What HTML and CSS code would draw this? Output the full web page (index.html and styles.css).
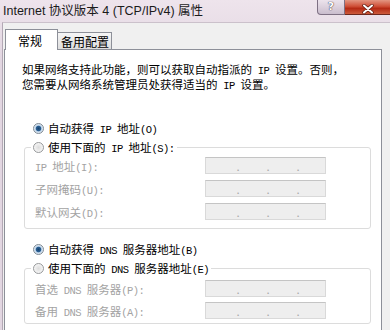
FILE: index.html
```html
<!DOCTYPE html>
<html lang="zh-CN">
<head>
  <meta charset="UTF-8">
  <title>Internet 协议版本 4 (TCP/IPv4) 属性</title>
  <link rel="stylesheet" href="styles.css">
</head>
<body>
  <div class="window">
    <!-- barra de título -->
    <div class="titlebar">
      <span class="title">Internet 协议版本 4 (TCP/IPv4) 属性</span>
      <div class="btn-help">?</div>
      <div class="btn-close">
        <svg class="close-icon" width="14" height="10" viewBox="0 0 14 10">
          <path d="M3 1.5 L11 8.5 M11 1.5 L3 8.5" stroke="#5a1a10" stroke-width="3.4" stroke-linecap="round"/>
          <path d="M3 1.5 L11 8.5 M11 1.5 L3 8.5" stroke="#fff" stroke-width="2" stroke-linecap="round"/>
        </svg>
      </div>
    </div>

    <div class="client">
      <div class="tabs">
        <span class="tab active">常规</span>
        <span class="tab">备用配置</span>
      </div>

      <div class="panel">
        <p class="intro">如果网络支持此功能，则可以获取自动指派的<span class="en"> IP </span>设置。否则，<br>您需要从网络系统管理员处获得适当的<span class="en"> IP </span>设置。</p>

        <div class="radio-row"><span class="radio checked"></span><span>自动获得<span class="en"> IP </span>地址<span class="en">(O)</span></span></div>
        <fieldset class="group">
          <legend><span class="radio"></span><span>使用下面的<span class="en"> IP </span>地址<span class="en">(S):</span></span></legend>
          <div class="field-row"><span class="label"><span class="en">IP </span>地址<span class="en">(I):</span></span><span class="ipbox"><i>.</i><i>.</i><i>.</i></span></div>
          <div class="field-row"><span class="label">子网掩码<span class="en">(U):</span></span><span class="ipbox"><i>.</i><i>.</i><i>.</i></span></div>
          <div class="field-row"><span class="label">默认网关<span class="en">(D):</span></span><span class="ipbox"><i>.</i><i>.</i><i>.</i></span></div>
        </fieldset>

        <div class="radio-row radio-dns"><span class="radio checked"></span><span>自动获得<span class="en"> DNS </span>服务器地址<span class="en">(B)</span></span></div>
        <fieldset class="group group-dns">
          <legend><span class="radio"></span><span>使用下面的<span class="en"> DNS </span>服务器地址<span class="en">(E)</span></span></legend>
          <div class="field-row"><span class="label">首选<span class="en"> DNS </span>服务器<span class="en">(P):</span></span><span class="ipbox"><i>.</i><i>.</i><i>.</i></span></div>
          <div class="field-row"><span class="label">备用<span class="en"> DNS </span>服务器<span class="en">(A):</span></span><span class="ipbox"><i>.</i><i>.</i><i>.</i></span></div>
        </fieldset>
      </div>
    </div>
  </div>
</body>
</html>
```

FILE: styles.css
```css
html, body {
  margin: 0;
  width: 390px;
  height: 330px;
  overflow: hidden;
}
body {
  background: #d9cdd9;
}
.window {
  height: 330px;
  display: flex;
  flex-direction: column;
  background: linear-gradient(#eee4ec, #e2d6e1 60px);
  overflow: hidden;
}
.titlebar {
  height: 22px;
  display: flex;
  align-items: flex-start;
  flex-shrink: 0;
}
.title {
  flex: 1;
  padding-left: 3px;
  line-height: 23px;
  font-family: "Liberation Sans", "Noto Sans CJK SC", sans-serif;
  font-size: 12.5px;
  color: #1b1b1b;
}
.btn-help {
  flex: 0 0 28px;
  height: 15px;
  box-sizing: border-box;
  border: 1px solid #7e7083;
  border-top: none;
  border-radius: 0 0 0 4px;
  background: #ddd1dd linear-gradient(#ece3ec, #cabdcd);
  text-align: center;
  font-family: "DejaVu Sans", sans-serif;
  font-weight: bold;
  font-size: 11px;
  line-height: 13px;
  color: #fff;
  text-shadow: 0 0 1px #3a3340, 0 0 1px #3a3340;
}
.btn-close {
  flex: 0 0 45px;
  height: 15px;
  box-sizing: border-box;
  border-bottom: 1px solid #6e271c;
  background: #c8442e linear-gradient(#e39682, #cf4f37 45%, #b52a14 60%, #cc5a3c);
  text-align: center;
}
.close-icon {
  display: inline-block;
  margin-top: 2px;
}
.client {
  flex: 1;
  margin-left: 2px;
  border-left: 1px solid #b3a8b5;
  border-top: 1px solid #cbc1cb;
  background: #f0f0f0;
  font-family: "Noto Sans CJK SC", sans-serif;
  font-size: 11.5px;
  color: #000;
}
.en {
  font-family: "Liberation Mono", monospace;
  font-size: 10.5px;
  letter-spacing: -0.55px;
  white-space: pre;
}
.tabs {
  display: flex;
  align-items: flex-end;
  margin: 6px 0 0 2px;
}
.tab {
  box-sizing: border-box;
  height: 17px;
  width: 55px;
  margin-left: -1px;
  padding: 0 3px;
  border: 1px solid #8d9099;
  border-bottom: none;
  background: linear-gradient(#f6f6f6, #dedede);
  font-size: 12px;
  line-height: 17px;
  white-space: nowrap;
}
.tab.active {
  position: relative;
  z-index: 1;
  height: 21px;
  width: 53px;
  margin: 0 0 -1px 0;
  padding-left: 12px;
  line-height: 22px;
  background: #fff;
}
.panel {
  width: 378px;
  height: 290px;
  margin-left: 1px;
  box-sizing: border-box;
  border: 1px solid #8d9099;
  background: #fff;
}
.intro {
  margin: 13px 0 0 17px;
  line-height: 12.5px;
  white-space: nowrap;
}
.radio-row, legend {
  display: flex;
  align-items: center;
  gap: 4px;
  height: 14px;
  white-space: nowrap;
}
.radio-row {
  margin: 29px 0 0 28px;
}
.radio-dns {
  margin-top: 13px;
}
.radio {
  width: 11px;
  height: 11px;
  box-sizing: border-box;
  border-radius: 50%;
  border: 1px solid #97999b;
  background: radial-gradient(circle, #dcdcdc 0, #f8f8f8 5px);
}
.radio.checked {
  border-color: #7f8a94;
  background: radial-gradient(circle, #17426d 0, #2a5f93 2.3px, #bcd3ea 3.2px, #eef3f8 5px);
}
.group {
  width: 347px;
  box-sizing: border-box;
  margin: 5px 0 0 19px;
  padding: 3px 0 8px 0;
  border: 1px solid #dcdcdc;
  border-radius: 3px;
  display: flex;
  flex-direction: column;
  gap: 6px;
}
.group legend {
  margin-left: 6px;
  padding: 0 2px;
}
.group-dns {
  padding: 5px 0 4px 0;
  gap: 5px;
}
.field-row {
  display: flex;
  align-items: center;
  margin-left: 10px;
  height: 17px;
}
.label {
  width: 170px;
  color: #a3a3a3;
  white-space: nowrap;
}
.ipbox {
  width: 121px;
  height: 17px;
  box-sizing: border-box;
  padding-left: 17px;
  border: 1px solid #d9d9d9;
  border-top-color: #c4c4c4;
  background: #eeeeee;
  display: flex;
  align-items: center;
}
.ipbox i {
  width: 30px;
  text-align: center;
  font-style: normal;
  color: #a8a8a8;
  line-height: 14px;
}
```
